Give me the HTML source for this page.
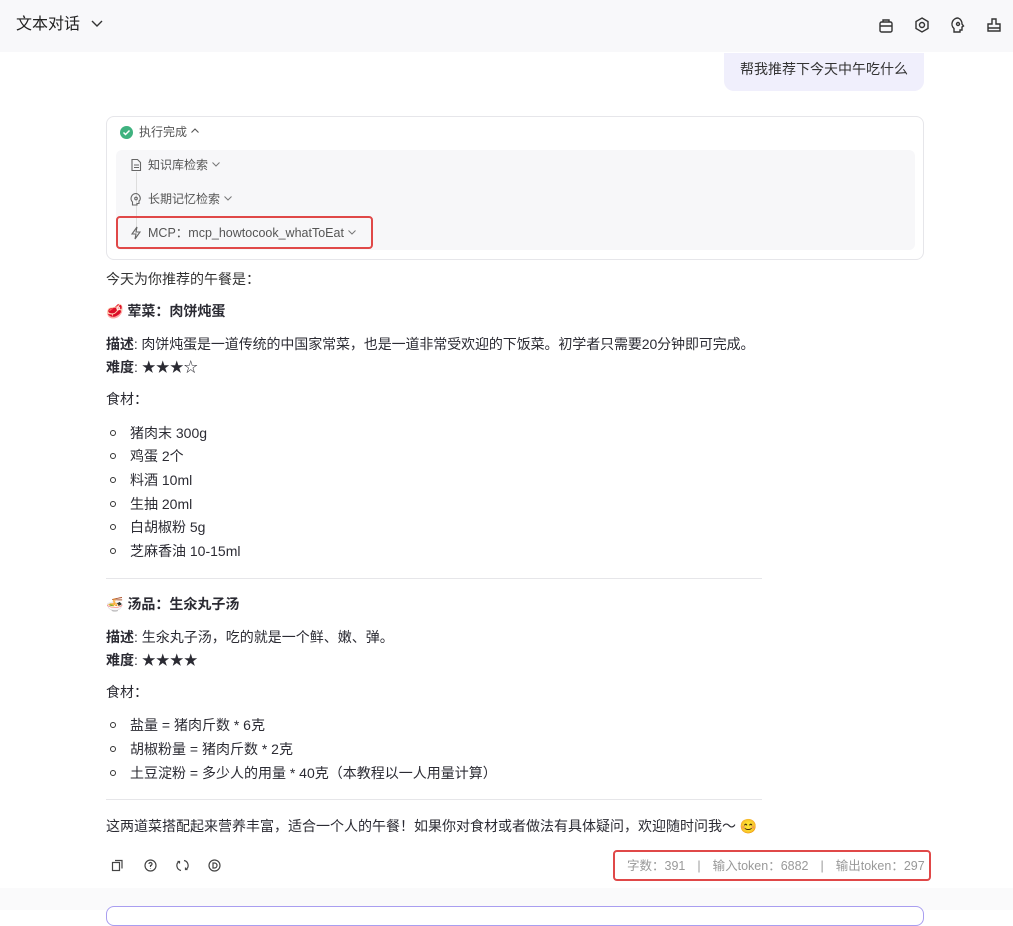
<!DOCTYPE html>
<html><head><meta charset="utf-8"><style>
*{margin:0;padding:0;box-sizing:border-box}
body{width:1013px;height:910px;overflow:hidden;background:#fff;font-family:"Liberation Sans","Noto Sans CJK SC",sans-serif;color:#2b2b33;font-size:14px;position:relative}
.a{position:absolute;white-space:nowrap;line-height:20px}
.hdr{position:absolute;left:0;top:0;width:1013px;height:52px;background:#f8f8fa}
b{font-weight:700}
.li{position:absolute;left:130px;white-space:nowrap;line-height:20px}
.dot{position:absolute;left:110px;width:6px;height:6px;border:1px solid #333;border-radius:50%}
.hr{position:absolute;left:106px;width:656px;height:1px;background:#e6e6e9}
.sep{display:inline-block;margin:0 12px}
</style></head><body>
<div class="hdr"></div>
<div class="a" style="left:16px;top:14px;font-size:16px;line-height:22px;color:#222">文本对话 <svg width="14" height="14" viewBox="0 0 14 14" style="margin-left:6px;vertical-align:-1px"><path d="M2 5l5 5 5-5" fill="none" stroke="#333" stroke-width="1.4"/></svg></div>
<svg style="position:absolute;left:877px;top:16px" width="18" height="18" viewBox="0 0 18 18" fill="none" stroke="#333" stroke-width="1.4"><rect x="3" y="6" width="12" height="10" rx="1.5"/><path d="M6 6V4h6v2M3 10h12"/></svg>
<svg style="position:absolute;left:913px;top:16px" width="18" height="18" viewBox="0 0 18 18" fill="none" stroke="#333" stroke-width="1.4"><path d="M9 2l6 3.5v7L9 16l-6-3.5v-7z"/><circle cx="9" cy="9" r="2.5"/></svg>
<svg style="position:absolute;left:949px;top:16px" width="18" height="18" viewBox="0 0 18 18" fill="none" stroke="#333" stroke-width="1.4"><path d="M9 2a6 6 0 0 0-4 10.5V16h6v-2h2v-3l1.5-1L13 8A6 6 0 0 0 9 2z"/><circle cx="9" cy="8" r="1.5"/></svg>
<svg style="position:absolute;left:985px;top:16px" width="18" height="18" viewBox="0 0 18 18" fill="none" stroke="#333" stroke-width="1.4"><path d="M7 3h4v5h4v7H3V8h4z M3 12h12"/></svg>

<div style="position:absolute;left:724px;top:53px;width:200px;height:38px;background:#f0effc;border-radius:0 0 10px 10px"></div>
<div class="a" style="left:740px;top:59px;color:#333">帮我推荐下今天中午吃什么</div>

<div style="position:absolute;left:106px;top:116px;width:818px;height:144px;border:1px solid #e6e6ea;border-radius:8px"></div>
<div style="position:absolute;left:116px;top:150px;width:799px;height:100px;background:#f7f7f9;border-radius:6px"></div>
<div style="position:absolute;left:120px;top:126px;width:13px;height:13px;border-radius:50%;background:#3fb27f"></div>
<svg style="position:absolute;left:120px;top:126px" width="13" height="13" viewBox="0 0 13 13"><path d="M3.5 6.5l2 2 4-4" fill="none" stroke="#fff" stroke-width="1.5"/></svg>
<div class="a" style="left:139px;top:122px;font-size:12px;color:#555">执行完成 <svg width="10" height="10" viewBox="0 0 10 10"><path d="M1.5 6.5L5 3l3.5 3.5" fill="none" stroke="#555" stroke-width="1.1"/></svg></div>
<div style="position:absolute;left:136px;top:172px;width:1px;height:56px;background:#ddd"></div>
<svg style="position:absolute;left:129px;top:158px" width="14" height="14" viewBox="0 0 14 14" fill="none" stroke="#666" stroke-width="1.1"><path d="M3 1.5h5.5L11.5 4.5v8h-8.5z M5 7h5M5 9.5h5"/></svg>
<div class="a" style="left:148px;top:155px;font-size:12px;color:#555">知识库检索 <svg width="10" height="10" viewBox="0 0 10 10"><path d="M1.5 3.5L5 7l3.5-3.5" fill="none" stroke="#777" stroke-width="1"/></svg></div>
<svg style="position:absolute;left:129px;top:192px" width="14" height="14" viewBox="0 0 14 14" fill="none" stroke="#666" stroke-width="1.1"><path d="M7 1.5a5 5 0 0 0-3.5 8.5V13h4.5v-1.5h2V9l1-1A5 5 0 0 0 7 1.5z"/><circle cx="7" cy="6.5" r="1.3"/></svg>
<div class="a" style="left:148px;top:189px;font-size:12px;color:#555">长期记忆检索 <svg width="10" height="10" viewBox="0 0 10 10"><path d="M1.5 3.5L5 7l3.5-3.5" fill="none" stroke="#777" stroke-width="1"/></svg></div>
<div style="position:absolute;left:116px;top:216px;width:257px;height:33px;border:2px solid #e04848;border-radius:4px"></div>
<svg style="position:absolute;left:129px;top:226px" width="14" height="14" viewBox="0 0 14 14" fill="none" stroke="#666" stroke-width="1.1"><path d="M8 1L3 8h4l-1 5 5-7H7z"/></svg>
<div class="a" style="left:148px;top:223px;font-size:12.5px;color:#555">MCP：mcp_howtocook_whatToEat <svg width="10" height="10" viewBox="0 0 10 10"><path d="M1.5 3.5L5 7l3.5-3.5" fill="none" stroke="#777" stroke-width="1"/></svg></div>

<div class="a" style="left:106px;top:269px;color:#333">今天为你推荐的午餐是：</div>
<div class="a" style="left:106px;top:301px"><span style="color:#c33">🥩</span> <b>荤菜：肉饼炖蛋</b></div>
<div class="a" style="left:106px;top:334px;letter-spacing:-0.1px"><b>描述</b>: 肉饼炖蛋是一道传统的中国家常菜，也是一道非常受欢迎的下饭菜。初学者只需要20分钟即可完成。</div>
<div class="a" style="left:106px;top:357px"><b>难度</b>: ★★★☆</div>
<div class="a" style="left:106px;top:389px">食材：</div>
<div class="dot" style="top:430px"></div><div class="li" style="top:423px">猪肉末 300g</div>
<div class="dot" style="top:453px"></div><div class="li" style="top:446px">鸡蛋 2个</div>
<div class="dot" style="top:477px"></div><div class="li" style="top:470px">料酒 10ml</div>
<div class="dot" style="top:501px"></div><div class="li" style="top:494px">生抽 20ml</div>
<div class="dot" style="top:524px"></div><div class="li" style="top:517px">白胡椒粉 5g</div>
<div class="dot" style="top:548px"></div><div class="li" style="top:541px">芝麻香油 10-15ml</div>
<div class="hr" style="top:578px"></div>
<div class="a" style="left:106px;top:594px">🍜 <b>汤品：生氽丸子汤</b></div>
<div class="a" style="left:106px;top:627px"><b>描述</b>: 生氽丸子汤，吃的就是一个鲜、嫩、弹。</div>
<div class="a" style="left:106px;top:650px"><b>难度</b>: ★★★★</div>
<div class="a" style="left:106px;top:682px">食材：</div>
<div class="dot" style="top:722px"></div><div class="li" style="top:715px">盐量 = 猪肉斤数 * 6克</div>
<div class="dot" style="top:746px"></div><div class="li" style="top:739px">胡椒粉量 = 猪肉斤数 * 2克</div>
<div class="dot" style="top:770px"></div><div class="li" style="top:763px">土豆淀粉 = 多少人的用量 * 40克（本教程以一人用量计算）</div>
<div class="hr" style="top:799px"></div>
<div class="a" style="left:106px;top:816px">这两道菜搭配起来营养丰富，适合一个人的午餐！如果你对食材或者做法有具体疑问，欢迎随时问我～ 😊</div>

<svg style="position:absolute;left:111px;top:859px" width="13" height="13" viewBox="0 0 13 13" fill="none" stroke="#444" stroke-width="1.2"><rect x="1.5" y="3.5" width="7" height="8"/><path d="M4 1.5h7v8"/></svg>
<svg style="position:absolute;left:144px;top:859px" width="13" height="13" viewBox="0 0 13 13" fill="none" stroke="#444" stroke-width="1.2"><circle cx="6.5" cy="6.5" r="5.5"/><path d="M5 5a1.5 1.5 0 1 1 1.5 1.5V8M6.5 9.5v.5"/></svg>
<svg style="position:absolute;left:176px;top:859px" width="13" height="13" viewBox="0 0 13 13" fill="none" stroke="#444" stroke-width="1.2"><path d="M3 2.5a5 5 0 0 0 2 9M10 10.5a5 5 0 0 0-2-9M1.5 2.5h2v2M11.5 10.5h-2v-2"/></svg>
<svg style="position:absolute;left:208px;top:859px" width="13" height="13" viewBox="0 0 13 13" fill="none" stroke="#444" stroke-width="1.2"><circle cx="6.5" cy="6.5" r="5.5"/><path d="M5 4v5h1.5a2.5 2.5 0 0 0 0-5z"/></svg>

<div style="position:absolute;left:613px;top:850px;width:318px;height:31px;border:2px solid #e04848;border-radius:4px"></div>
<div class="a" style="left:627px;top:856px;font-size:12.5px;color:#999">字数：391<span class="sep">|</span>输入token：6882<span class="sep">|</span>输出token：297</div>

<div style="position:absolute;left:0;top:888px;width:1013px;height:22px;background:#fafafb"></div>
<div style="position:absolute;left:106px;top:906px;width:818px;height:20px;border:1px solid #a99ef0;border-radius:8px;background:#fff"></div>
</body></html>
